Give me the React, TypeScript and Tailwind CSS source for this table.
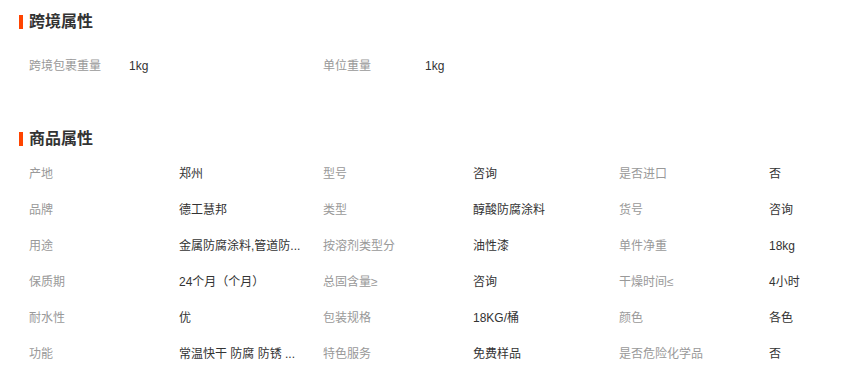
import * as React from "react";

const CROSS = [
  ["跨境包裹重量", "1kg"],
  ["单位重量", "1kg"],
];

const PRODUCT: [string, string][][] = [
  [["产地", "郑州"], ["型号", "咨询"], ["是否进口", "否"]],
  [["品牌", "德工慧邦"], ["类型", "醇酸防腐涂料"], ["货号", "咨询"]],
  [["用途", "金属防腐涂料,管道防..."], ["按溶剂类型分", "油性漆"], ["单件净重", "18kg"]],
  [["保质期", "24个月（个月）"], ["总固含量≥", "咨询"], ["干燥时间≤", "4小时"]],
  [["耐水性", "优"], ["包装规格", "18KG/桶"], ["颜色", "各色"]],
  [["功能", "常温快干 防腐 防锈 ..."], ["特色服务", "免费样品"], ["是否危险化学品", "否"]],
];

function Heading({ title }: { title: string }) {
  return (
    <div className="flex h-[20px] items-center">
      <span className="h-[14px] w-[4px] bg-[#ff4400]" />
      <h3 className="ml-[6px] text-[16px] font-bold leading-[20px] text-[#333]">{title}</h3>
    </div>
  );
}

export default function App() {
  return (
    <div
      className="min-h-[373px] w-[841px] bg-white pl-[19px] pt-[12px] text-[12px]"
      style={{ fontFamily: '"Liberation Sans", Arial, "Noto Sans CJK SC", sans-serif' }}
    >
      <Heading title="跨境属性" />
      <div className="mt-[16px] grid h-[36px] grid-cols-[100px_194px_102px_1fr] items-center pl-[10px]">
        <span className="text-[#999]">{CROSS[0][0]}</span>
        <span className="text-[#333]">{CROSS[0][1]}</span>
        <span className="text-[#999]">{CROSS[1][0]}</span>
        <span className="text-[#333]">{CROSS[1][1]}</span>
      </div>

      <div className="mt-[45px]">
        <Heading title="商品属性" />
      </div>
      <div className="mt-[7px] pl-[10px]">
        {PRODUCT.map((row, i) => (
          <div key={i} className="grid h-[36px] grid-cols-[150px_144px_150px_146px_150px_1fr] items-center">
            {row.map(([label, value]) => (
              <React.Fragment key={label}>
                <span className="text-[#999]">{label}</span>
                <span className="whitespace-nowrap text-[#333]">{value}</span>
              </React.Fragment>
            ))}
          </div>
        ))}
      </div>
    </div>
  );
}
